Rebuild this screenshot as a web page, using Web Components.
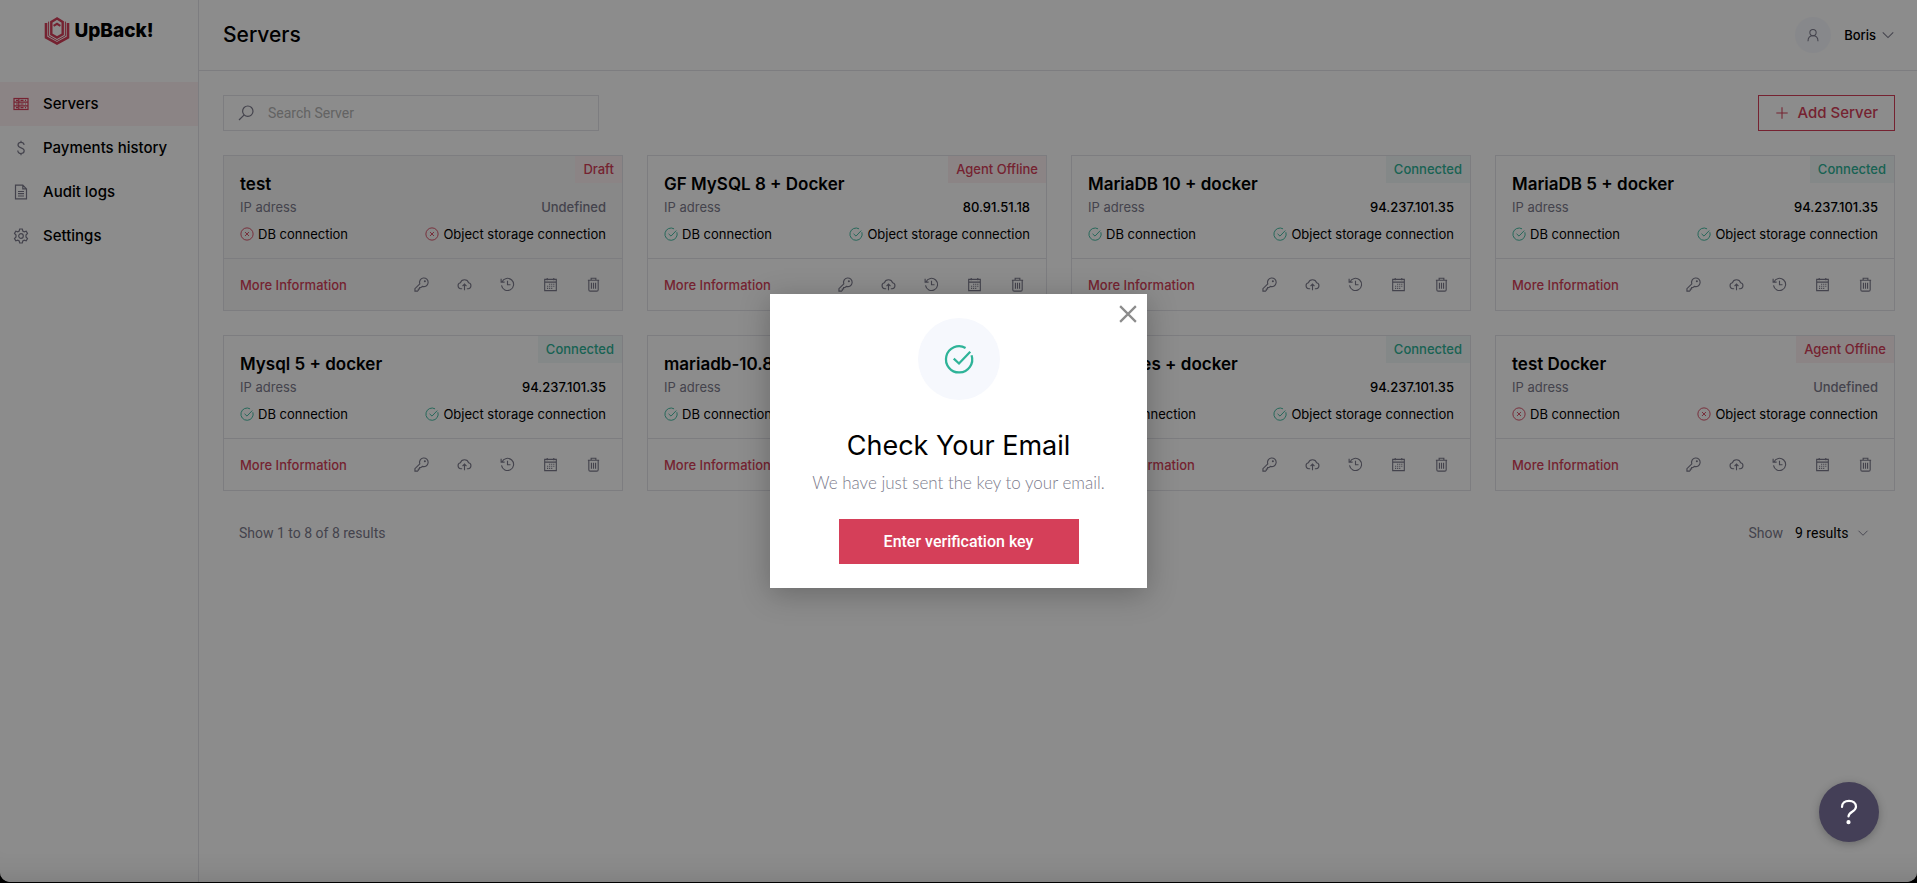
<!DOCTYPE html>
<html lang="en">
<head>
<meta charset="UTF-8">
<title>UpBack! - Servers</title>
<style>
  body {
    margin: 0;
    background: #000;
    font-family: Inter, "Liberation Sans", sans-serif;
    font-size: 14px;
    line-height: 20px;
    color: #000;
    --font-control: Roboto, "Liberation Sans", sans-serif;
    --red: #d53f59;
    --green: #2eb398;
    --muted: #7c7b8c;
    --line: #e4e4ea;
    --soft: #f6f8fd;
    --soft-red: #fdf0f2;
    --soft-green: #f1f8f7;
  }
</style>
</head>
<body>
<upback-app></upback-app>

<script>
const SERVERS = [
  { name: 'test', ip: '', status: 'Draft', ok: false, draft: true },
  { name: 'GF MySQL 8 + Docker', ip: '80.91.51.18', status: 'Agent Offline', ok: true },
  { name: 'MariaDB 10 + docker', ip: '94.237.101.35', status: 'Connected', ok: true },
  { name: 'MariaDB 5 + docker', ip: '94.237.101.35', status: 'Connected', ok: true },
  { name: 'Mysql 5 + docker', ip: '94.237.101.35', status: 'Connected', ok: true },
  { name: 'mariadb-10.8', ip: '94.237.101.35', status: 'Connected', ok: true },
  { name: 'Postgres + docker', ip: '94.237.101.35', status: 'Connected', ok: true },
  { name: 'test Docker', ip: '', status: 'Agent Offline', ok: false }
];

const ICONS = {
  servers: '<rect x="1" y="2.5" width="14" height="11"/><path d="M1 6.2h14M1 9.8h14M5.8 2.5v11M3 4.4h2M3 8h2M3 11.6h2M7.5 4.4h3M7.5 8h3M7.5 11.6h3M12 4.4h1M12 8h1M12 11.6h1"/>',
  dollar: '<path d="M11 5C11 3.2 9.8 2.4 8 2.4S5 3.3 5 5c0 3.8 6.2 2 6.2 5.8 0 1.8-1.3 2.7-3.2 2.7s-3.2-1-3.2-2.9M8 .7v1.7M8 13.5v1.8"/>',
  file: '<path d="M2.5 1.2h7.3l3.7 3.7v9.9h-11zM9.8 1.2v3.7h3.7M5 7.5h6M5 9.7h6M5 12h6"/>',
  gear: '<path d="M6.7 1h2.6l.5 2 1.4.8 2-.6 1.3 2.3L13 7v2l1.5 1.5-1.3 2.3-2-.6-1.4.8-.5 2H6.7l-.5-2-1.4-.8-2 .6-1.3-2.3L3 9V7L1.5 5.5l1.3-2.3 2 .6L6.2 3z"/><circle cx="8" cy="8" r="2.3"/>',
  search: '<circle cx="9.8" cy="6.2" r="5.2"/><path d="M6.2 9.8L1 15"/>',
  user: '<circle cx="8" cy="5.2" r="3.6"/><path d="M2.3 15c0-3.7 2.4-6.2 5.7-6.2s5.7 2.5 5.7 6.2"/>',
  chevron: '<path d="M2 5l6 6 6-6"/>',
  plus: '<path d="M8 1.5v13M1.5 8h13"/>',
  close: '<path d="M1 1l14 14M15 1L1 15"/>',
  check: '<path d="M11.5 2.1A7 7 0 1 0 14.7 6M5.2 7.8L8 10.4l6-6.3"/>',
  cross: '<circle cx="8" cy="8" r="7"/><path d="M5.7 5.7l4.6 4.6M10.3 5.7l-4.6 4.6"/>',
  key: '<path d="M6.2 7.3A4.6 4.6 0 1 1 9 10L7.5 11.2H6v1.6H4.6v1.4L3.7 15H1v-2.6z"/><circle cx="11.6" cy="4.5" r=".5"/>',
  cloud: '<path d="M5.5 12.5H4a3.2 3.2 0 0 1-.4-6.3 4.6 4.6 0 0 1 8.8 0 3.2 3.2 0 0 1-.4 6.3h-1.5M8 14V7.8M5.9 9.8L8 7.6l2.1 2.2"/>',
  history: '<path d="M2.1 5.2A6.5 6.5 0 1 1 1.6 9M1.2 1.8v3.6h3.7M8 4v4.2h3.2"/>',
  calendar: '<path d="M1.8 2.5h12.4v12H1.8zM1.8 5.5h12.4M4.5 1v2.5M11.5 1v2.5"/><path stroke-dasharray="1.2 1" d="M6.5 7.7h5.6M4.3 9.9h7.8M4.3 12.1h5.6"/>',
  trash: '<path d="M2 3.5h12M5.5 3.5V1.3h5v2.2M3 3.5v10q0 1.5 1.5 1.5h7q1.5 0 1.5-1.5v-10M5.8 6v6.5M8 6v6.5M10.2 6v6.5"/>'
};

class UbIcon extends HTMLElement {
  connectedCallback() {
    const shadow = this.attachShadow({ mode: 'open' });
    shadow.innerHTML = `
      <style>
        :host { display: inline-flex; flex: none; width: var(--icon-size, 16px); height: var(--icon-size, 16px); }
        svg { width: 100%; height: 100%; fill: none; stroke: currentColor; stroke-width: var(--icon-stroke, 1.2); overflow: visible; }
      </style>
      <svg viewBox="0 0 16 16" aria-hidden="true">${ICONS[this.getAttribute('name')]}</svg>
    `;
  }
}
customElements.define('ub-icon', UbIcon);

// --- Sidebar ---
class UbLogo extends HTMLElement {
  connectedCallback() {
    this.attachShadow({ mode: 'open' }).innerHTML = `
      <style>
        :host { display: flex; justify-content: center; align-items: center; gap: 4px; height: 28px; font-size: 19px; font-weight: 800; line-height: 28px; }
        svg { width: 26px; height: 28px; fill: none; stroke: var(--red); }
      </style>
      <svg viewBox="0 0 26 28" aria-hidden="true">
        <path stroke-width="2.6" d="M2 6v14.5l11 6 11-6V6"/>
        <path stroke-width="1" d="M4.6 4.6v14.2L13 23.6l8.400-4.800V4.600"/>
        <path stroke-width="2.400" d="M13 1.500L7.300 4.900v12.300L13 20.600l5.700-3.400V4.900z"/>
        <path stroke-width="2" d="M9.600 8.900L13 6.800l3.400 2.100"/>
      </svg>
      <span>UpBack!</span>
    `;
  }
}
customElements.define('ub-logo', UbLogo);

class UbNavItem extends HTMLElement {
  connectedCallback() {
    this.attachShadow({ mode: 'open' }).innerHTML = `
      <style>
        :host { display: block; }
        a { display: flex; align-items: center; gap: 14px; height: 44px; padding: 0 13px; color: #000; text-decoration: none; font-size: 15px; font-weight: 500; }
        ub-icon { color: var(--muted); }
        :host([active]) a { background: var(--soft-red); }
        :host([active]) ub-icon { color: var(--red); }
      </style>
      <a href="#"><ub-icon name="${this.getAttribute('icon')}"></ub-icon><span><slot></slot></span></a>
    `;
  }
}
customElements.define('ub-nav-item', UbNavItem);

class UbSidebar extends HTMLElement {
  connectedCallback() {
    this.attachShadow({ mode: 'open' }).innerHTML = `
      <style>
        :host { display: block; padding-top: 17px; border-right: 1px solid var(--line); }
        nav { margin-top: 37px; }
      </style>
      <ub-logo></ub-logo>
      <nav>
        <ub-nav-item icon="servers" active>Servers</ub-nav-item>
        <ub-nav-item icon="dollar">Payments history</ub-nav-item>
        <ub-nav-item icon="file">Audit logs</ub-nav-item>
        <ub-nav-item icon="gear">Settings</ub-nav-item>
      </nav>
    `;
  }
}
customElements.define('ub-sidebar', UbSidebar);

// --- Header ---
class UbHeader extends HTMLElement {
  connectedCallback() {
    this.attachShadow({ mode: 'open' }).innerHTML = `
      <style>
        :host { display: flex; align-items: center; justify-content: space-between; height: 70px; padding: 0 22px 0 24px; border-bottom: 1px solid var(--line); }
        h1 { margin: 0; font-size: 21px; font-weight: 500; line-height: 28px; }
        button { display: flex; align-items: center; padding: 0; border: 0; background: none; font: inherit; font-size: 13px; font-weight: 500; color: #000; }
        .avatar { display: flex; align-items: center; justify-content: center; width: 36px; height: 36px; margin-right: 13px; border-radius: 50%; background: var(--soft); color: var(--muted); --icon-size: 14px; }
        .chevron { margin-left: 5px; color: var(--muted); --icon-size: 14px; }
      </style>
      <h1><slot></slot></h1>
      <button type="button">
        <span class="avatar"><ub-icon name="user"></ub-icon></span>
        Boris
        <ub-icon class="chevron" name="chevron"></ub-icon>
      </button>
    `;
  }
}
customElements.define('ub-header', UbHeader);

// --- Toolbar: search + add ---
class UbToolbar extends HTMLElement {
  connectedCallback() {
    this.attachShadow({ mode: 'open' }).innerHTML = `
      <style>
        :host { display: flex; justify-content: space-between; }
        label { display: flex; align-items: center; gap: 14px; box-sizing: border-box; width: 376px; height: 36px; padding: 0 14px; border: 1px solid var(--line); color: var(--muted); }
        input { flex: 1; min-width: 0; padding: 0; border: 0; outline: 0; background: none; font: inherit; font-family: var(--font-control); }
        input::placeholder { color: #b4b4b4; opacity: 1; }
        button { display: flex; align-items: center; gap: 8px; height: 36px; padding: 0 16px; border: 1px solid var(--red); background: none; color: var(--red); font: inherit; font-size: 15px; font-weight: 500; --icon-size: 14px; }
      </style>
      <label><ub-icon name="search"></ub-icon><input type="search" placeholder="Search Server" aria-label="Search Server"></label>
      <button type="button"><ub-icon name="plus"></ub-icon>Add Server</button>
    `;
  }
}
customElements.define('ub-toolbar', UbToolbar);

// --- Server card ---
class ServerCard extends HTMLElement {
  constructor() {
    super();
    this.attachShadow({ mode: 'open' });
  }

  set server(data) {
    const tone = data.status === 'Connected' ? 'good' : 'bad';
    const link = data.ok ? 'good' : 'bad';
    const icon = data.ok ? 'check' : 'cross';
    const actions = ['key', 'cloud', 'history', 'calendar', 'trash'];
    this.shadowRoot.innerHTML = `
      <style>
        :host { display: block; position: relative; min-width: 0; border: 1px solid var(--line); font-size: 13px; }
        .draft { background: #f8f8f8; }
        .body { height: 102px; box-sizing: border-box; padding: 16px 16px 0; }
        h2 { margin: 0; font-size: 17px; font-weight: 600; line-height: 24px; white-space: nowrap; }
        .row { display: flex; justify-content: space-between; line-height: 22px; }
        .row + .row { margin-top: 5px; }
        .muted { color: var(--muted); }
        .ip { font-weight: 500; }
        .link { display: flex; align-items: center; gap: 4px; }
        .link ub-icon { --icon-size: 14px; --icon-stroke: 1; }
        .good ub-icon, .badge.good { color: var(--green); }
        .bad ub-icon, .badge.bad { color: var(--red); }
        .badge { position: absolute; top: 0; right: 0; padding: 0 8px; font-weight: 500; line-height: 27px; }
        .badge.good { background: var(--soft-green); }
        .badge.bad { background: var(--soft-red); }
        footer { display: flex; align-items: center; justify-content: space-between; height: 51px; padding: 0 16px; border-top: 1px solid var(--line); }
        a { color: var(--red); font-weight: 500; text-decoration: none; }
        .actions { display: flex; gap: 17px; }
        button { display: flex; justify-content: center; width: 26px; padding: 0; border: 0; background: none; color: var(--muted); --icon-size: 15px; }
      </style>
      <div class="${data.draft ? 'draft' : ''}">
        <div class="body">
          <h2>${data.name}</h2>
          <div class="row">
            <span class="muted">IP adress</span>
            <span class="ip ${data.ip ? '' : 'muted'}">${data.ip || 'Undefined'}</span>
          </div>
          <div class="row">
            <span class="link ${link}"><ub-icon name="${icon}"></ub-icon>DB connection</span>
            <span class="link ${link}"><ub-icon name="${icon}"></ub-icon>Object storage connection</span>
          </div>
        </div>
        <footer>
          <a href="#">More Information</a>
          <div class="actions">
            ${actions.map(name => `<button type="button" aria-label="${name}"><ub-icon name="${name}"></ub-icon></button>`).join('')}
          </div>
        </footer>
      </div>
      <span class="badge ${tone}">${data.status}</span>
    `;
  }
}
customElements.define('server-card', ServerCard);

class ServerGrid extends HTMLElement {
  connectedCallback() {
    const shadow = this.attachShadow({ mode: 'open' });
    shadow.innerHTML = `
      <style>
        :host { display: grid; grid-template-columns: repeat(auto-fill, minmax(360px, 1fr)); gap: 24px; }
      </style>
    `;
    SERVERS.forEach(item => {
      const card = document.createElement('server-card');
      card.server = item;
      shadow.appendChild(card);
    });
  }
}
customElements.define('server-grid', ServerGrid);

class UbPager extends HTMLElement {
  connectedCallback() {
    this.attachShadow({ mode: 'open' }).innerHTML = `
      <style>
        :host { display: flex; justify-content: space-between; padding: 0 26px 0 16px; color: var(--muted); font-family: var(--font-control); }
        label { display: flex; align-items: center; gap: 12px; }
        .pick { display: flex; align-items: center; gap: 8px; --icon-size: 12px; }
        select { appearance: none; padding: 0; border: 0; outline: 0; background: none; font: inherit; color: #000; }
      </style>
      <span>Show 1 to 8 of 8 results</span>
      <label>Show
        <span class="pick"><select><option>9 results</option></select><ub-icon name="chevron"></ub-icon></span>
      </label>
    `;
  }
}
customElements.define('ub-pager', UbPager);

// --- Modal ---
class UbModal extends HTMLElement {
  connectedCallback() {
    this.attachShadow({ mode: 'open' }).innerHTML = `
      <style>
        :host { position: absolute; inset: 0; display: flex; align-items: center; justify-content: center; background: rgba(0, 0, 0, .45); box-shadow: inset 0 -30px 30px -30px rgba(0, 0, 0, .15); }
        section { position: relative; box-sizing: border-box; width: 377px; padding: 24px; background: #fff; box-shadow: 0 6px 28px rgba(0, 0, 0, .25); text-align: center; }
        .close { position: absolute; top: 11px; right: 10px; display: flex; padding: 0; border: 0; background: none; color: #8c8c8c; --icon-size: 18px; --icon-stroke: 2; }
        .badge { display: flex; align-items: center; justify-content: center; width: 82px; height: 82px; margin: 0 auto; border-radius: 50%; background: var(--soft); color: var(--green); --icon-size: 30px; }
        h2 { margin: 28px 0 0; font-size: 27px; font-weight: 400; line-height: 36px; }
        p { margin: 7px 0 0; color: var(--muted); font-family: Lato, "Liberation Sans", sans-serif; font-size: 17px; font-weight: 300; line-height: 24px; }
        .go { width: 240px; height: 45px; margin-top: 24px; padding: 0; border: 0; background: var(--red); color: #fff; font-family: var(--font-control); font-size: 16px; font-weight: 500; }
      </style>
      <section role="dialog" aria-labelledby="title">
        <button class="close" type="button" aria-label="Close"><ub-icon name="close"></ub-icon></button>
        <div class="badge"><ub-icon name="check"></ub-icon></div>
        <h2 id="title"><slot name="title"></slot></h2>
        <p><slot></slot></p>
        <button class="go" type="button"><slot name="action"></slot></button>
      </section>
    `;
  }
}
customElements.define('ub-modal', UbModal);

class UbHelp extends HTMLElement {
  connectedCallback() {
    this.attachShadow({ mode: 'open' }).innerHTML = `
      <style>
        :host { position: absolute; right: 38px; bottom: 40px; }
        button { display: flex; align-items: center; justify-content: center; width: 60px; height: 60px; padding: 0; border: 0; border-radius: 50%; background: #443f57; box-shadow: 0 2px 8px rgba(0, 0, 0, .25); }
        svg { width: 24px; height: 28px; fill: none; stroke: #fff; stroke-width: 2.2; stroke-linecap: round; }
      </style>
      <button type="button" aria-label="Help">
        <svg viewBox="0 0 24 28" aria-hidden="true">
          <path d="M5 9c0-4 3-6.2 7-6.2S19 5 19 8.8c0 5.2-7.5 4.7-7.5 9.7"/>
          <circle cx="11.5" cy="24.2" r="1" fill="#fff"/>
        </svg>
      </button>
    `;
  }
}
customElements.define('ub-help', UbHelp);

// --- App shell ---
class UpbackApp extends HTMLElement {
  connectedCallback() {
    this.attachShadow({ mode: 'open' }).innerHTML = `
      <style>
        :host { position: relative; display: grid; grid-template-columns: 199px minmax(0, 1fr); min-height: calc(100vh - 1px); background: #fff; border-radius: 0 0 10px 10px; overflow: hidden; }
        .content { display: flex; flex-direction: column; gap: 24px; padding: 24px 22px 24px 24px; }
        ub-pager { margin-top: 8px; }
      </style>
      <ub-sidebar></ub-sidebar>
      <main>
        <ub-header>Servers</ub-header>
        <div class="content">
          <ub-toolbar></ub-toolbar>
          <server-grid></server-grid>
          <ub-pager></ub-pager>
        </div>
      </main>
      <ub-modal>
        <span slot="title">Check Your Email</span>
        We have just sent the key to your email.
        <span slot="action">Enter verification key</span>
      </ub-modal>
      <ub-help></ub-help>
    `;
  }
}
customElements.define('upback-app', UpbackApp);
</script>
</body>
</html>
